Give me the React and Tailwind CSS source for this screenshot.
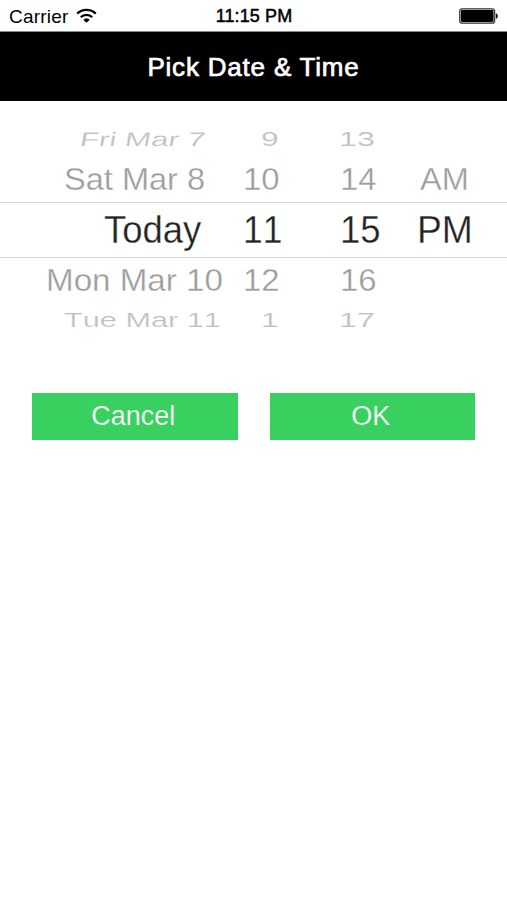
const WifiIcon = () => (
  <svg width="21" height="16" viewBox="0 0 21 16" fill="none" stroke="#000" strokeWidth="2.3">
    <path d="M1.2 5.6 C6.4 0.5 14.6 0.5 19.8 5.6" />
    <path d="M4.8 9.2 C8 6.1 13 6.1 16.2 9.2" />
    <path d="M10.5 14.8 L7.3 11.7 C9 10 12 10 13.7 11.7 Z" fill="#000" stroke="none" />
  </svg>
);

const BatteryIcon = () => (
  <svg width="40" height="16" viewBox="0 0 40 16">
    <rect x="0.7" y="0.7" width="35" height="14.6" rx="2.6" fill="#bbb" stroke="#333" strokeWidth="1.1" />
    <rect x="2" y="2" width="32.4" height="12" rx="1.4" fill="#000" />
    <path d="M36.8 5.2 C39.4 5.8 39.4 10.2 36.8 10.8 Z" fill="#000" />
  </svg>
);

// Rows get flatter and lighter the further they are from the selected one
const rows = [
  {
    id: 'far-top',
    className: 'h-[18px] text-[31px] text-[#c0c0c0]',
    cells: [
      { text: 'Fri Mar 7', className: 'ml-[80px] scale-x-[1.01] scale-y-[0.63] -skew-x-6' },
      { text: '9', className: 'ml-[16px] scale-x-[1.02] scale-y-[0.63]' },
      { text: '13', className: 'ml-[-3px] scale-x-[1.04] scale-y-[0.63]' },
    ],
  },
  {
    id: 'near-top',
    className: 'h-[60px] pt-[14px] text-[31px] text-[#9c9c9c]',
    cells: [
      { text: 'Sat Mar 8', className: 'ml-[64px] scale-x-[1.05]' },
      { text: '10', className: 'ml-[-2px] scale-x-[1.06]' },
      { text: '14', className: 'ml-[-2px] scale-x-[1.06]' },
      { text: 'AM', className: 'ml-px scale-x-[1.05]' },
    ],
  },
  {
    id: 'selected',
    className: 'h-[56px] border-y border-[#d4d4d4] text-[38px] text-[#222]',
    cells: [
      { text: 'Today', className: 'ml-[104px] scale-x-[0.96] [font-kerning:normal]' },
      { text: '11', className: 'ml-[-2px] scale-x-[0.93]' },
      { text: '15', className: 'ml-[-2px] scale-x-[0.96]' },
      { text: 'PM', className: 'ml-[-2px] scale-x-[0.98]' },
    ],
  },
  {
    id: 'near-bottom',
    className: 'h-[44px] text-[31px] text-[#9c9c9c]',
    cells: [
      { text: 'Mon Mar 10', className: 'ml-[46px] scale-x-[1.07]' },
      { text: '12', className: 'ml-[-2px] scale-x-[1.06]' },
      { text: '16', className: 'ml-[-2px] scale-x-[1.06]' },
    ],
  },
  {
    id: 'far-bottom',
    className: 'h-[36px] text-[31px] text-[#c0c0c0]',
    cells: [
      { text: 'Tue Mar 11', className: 'ml-[64px] scale-x-[0.99] scale-y-[0.63]' },
      { text: '1', className: 'ml-[16px] scale-x-[1.02] scale-y-[0.63]' },
      { text: '17', className: 'ml-[-3px] scale-x-[1.04] scale-y-[0.63]' },
    ],
  },
];

const App = () => {
  return (
    <div className="min-h-screen w-full bg-white font-['Liberation_Sans',Arial,sans-serif] text-black">
      {/* Status bar */}
      <div className="grid h-[32px] grid-cols-3 items-center border-b border-[#8a8a8a] pr-[8px] pl-[9px]">
        <div className="flex items-center gap-[8px] pt-px">
          <span className="text-[19px] leading-none tracking-[0.2px]">Carrier</span>
          <WifiIcon />
        </div>
        <div className="pt-px text-center text-[18px] leading-none tracking-[0.1px] [-webkit-text-stroke:0.5px_#000]">
          11:15 PM
        </div>
        <div className="flex justify-end">
          <BatteryIcon />
        </div>
      </div>

      {/* Header */}
      <div className="flex h-[69px] items-center justify-center bg-black">
        <h1 className="text-[26px] leading-none tracking-[0.8px] text-white [-webkit-text-stroke:0.7px_#fff]">
          Pick Date &amp; Time
        </h1>
      </div>

      {/* Picker */}
      <div className="pt-[23px] [font-kerning:none] [-webkit-text-stroke:0.3px_#fff]">
        {rows.map((row) => (
          <div
            key={row.id}
            className={`grid grid-cols-[245px_97px_77px_88px] items-center leading-none ${row.className}`}
          >
            {row.cells.map((cell) => (
              <span key={cell.text} className={`origin-left whitespace-nowrap ${cell.className}`}>
                {cell.text}
              </span>
            ))}
          </div>
        ))}
      </div>

      {/* Actions */}
      <div className="mt-[55px] grid grid-cols-2 gap-[32px] px-[32px]">
        <button className="h-[47px] bg-[#38d15f] pr-[3px] pb-px text-[27px] leading-none text-white [-webkit-text-stroke:0.2px_#38d15f]">
          Cancel
        </button>
        <button className="h-[47px] bg-[#38d15f] pr-[3px] pb-px text-[27px] leading-none text-white [-webkit-text-stroke:0.2px_#38d15f]">
          OK
        </button>
      </div>
    </div>
  );
};

export default App;
